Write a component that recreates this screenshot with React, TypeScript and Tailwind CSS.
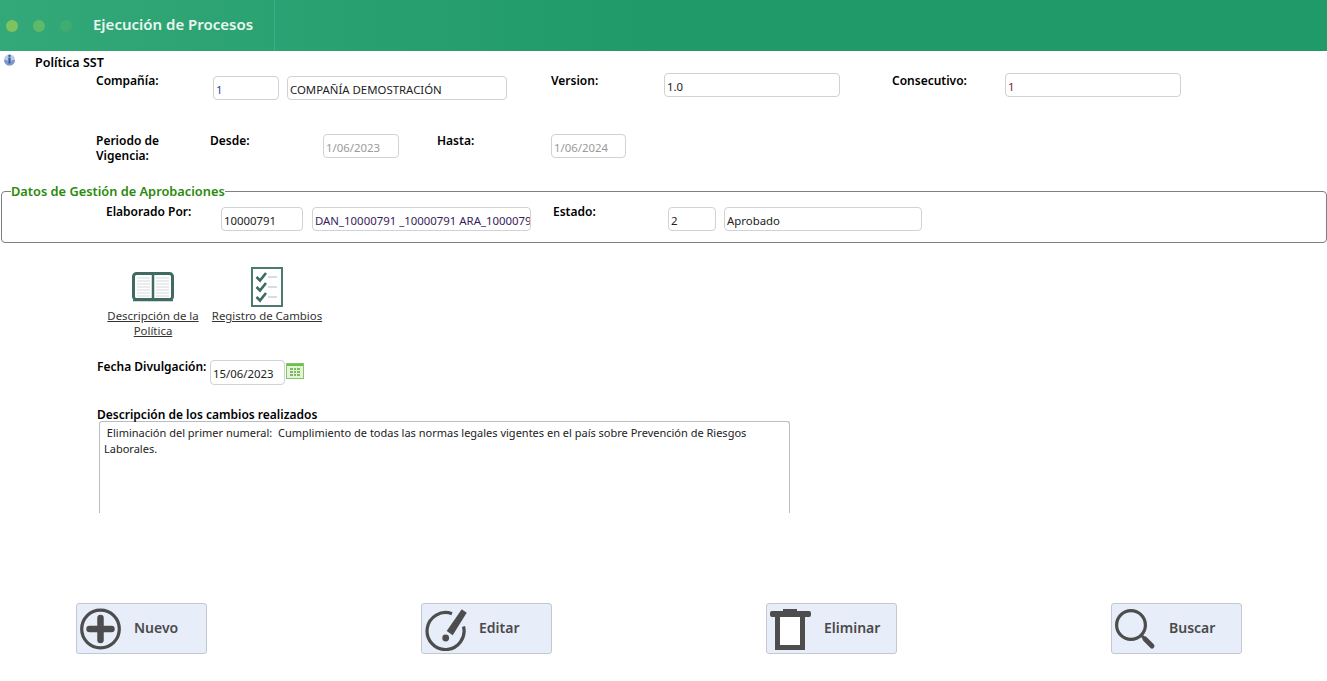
import { ReactNode } from "react";

const font = "font-['Noto_Sans',sans-serif]";

const Label = ({ children, className = "" }: { children: ReactNode; className?: string }) => (
  <div className={`text-[12px] leading-[15px] font-semibold text-black ${className}`}>{children}</div>
);

const Field = ({ value, className = "", tone = "text-[#222]" }: { value: string; className?: string; tone?: string }) => (
  <div
    className={`h-6 shrink-0 rounded-[4px] border border-[#cfd2d6] bg-white px-[2px] pt-[6px] text-[11.4px] leading-[14px] whitespace-nowrap overflow-hidden ${tone} ${className}`}
  >
    {value}
  </div>
);

const BookIcon = () => (
  <svg width="42" height="30" viewBox="0 0 42 30">
    <rect x="1.5" y="1.5" width="39" height="26" rx="3" fill="#fff" stroke="#3f6b62" strokeWidth="3" />
    <path d="M21 1v28" stroke="#3f6b62" strokeWidth="2.5" />
    <path d="M1 28.5h40" stroke="#3f6b62" strokeWidth="1.5" />
    <path
      d="M5 6h13M5 9h13M5 12h13M5 15h13M5 18h13M5 21h13M5 24h13M24 6h13M24 9h13M24 12h13M24 15h13M24 18h13M24 21h13M24 24h13"
      stroke="#d3dad8"
      strokeWidth="1"
    />
  </svg>
);

const ChecklistIcon = () => (
  <svg width="32" height="40" viewBox="0 0 32 40">
    <rect x="1" y="1" width="30" height="38" fill="#fff" stroke="#4a7a70" strokeWidth="2" />
    <path d="M5.5 10l3.5 3.5 6-7.5M5.5 20l3.5 3.5 6-7.5M5.5 30l3.5 3.5 6-7.5" fill="none" stroke="#3f6b62" strokeWidth="2.6" />
    <path d="M17 10h9M17 20h9M17 30h9" stroke="#ccd4d2" strokeWidth="1.6" />
  </svg>
);

const CalendarIcon = () => (
  <svg width="18" height="16" viewBox="0 0 18 16">
    <rect x="0.5" y="0.5" width="17" height="15" fill="#e4f3d8" stroke="#86c766" />
    <rect x="1" y="1" width="16" height="2" fill="#6cbf4a" />
    <rect x="4" y="5" width="10" height="8" fill="#7fb866" />
    <path d="M4 7.5h10M4 10.5h10M7.5 5v8M10.5 5v8" stroke="#e4f3d8" strokeWidth="1" />
  </svg>
);

const PlusIcon = () => (
  <svg width="42" height="44" viewBox="0 0 42 44">
    <circle cx="20.5" cy="22" r="18.8" fill="none" stroke="#4d4d4d" strokeWidth="3.2" />
    <path d="M20.5 11v22M9.5 22h22" stroke="#4d4d4d" strokeWidth="6.5" strokeLinecap="round" />
  </svg>
);

const EditIcon = () => (
  <svg width="44" height="44" viewBox="0 0 44 44">
    <path d="M27 6.7A18.5 18.5 0 1 0 38.5 19.5" fill="none" stroke="#4d4d4d" strokeWidth="3.2" />
    <path d="M36.7 2.3l5 3.4-14 22.6-6-4.3z" fill="#4d4d4d" />
    <circle cx="20.7" cy="31" r="3.4" fill="#4d4d4d" />
  </svg>
);

const TrashIcon = () => (
  <svg width="42" height="44" viewBox="0 0 42 44">
    <path d="M13 2h14v2h-14z" fill="#4d4d4d" />
    <rect x="0" y="4" width="41" height="6" rx="2" fill="#4d4d4d" />
    <rect x="5" y="9" width="30" height="34" fill="#4d4d4d" />
    <rect x="10" y="10" width="20" height="28" fill="#fff" />
  </svg>
);

const SearchIcon = () => (
  <svg width="44" height="44" viewBox="0 0 44 44">
    <circle cx="16" cy="18" r="14.4" fill="none" stroke="#4d4d4d" strokeWidth="3.2" />
    <path d="M27 29l3 3" stroke="#4d4d4d" strokeWidth="3" />
    <path d="M30 32l7 7" stroke="#4d4d4d" strokeWidth="5" strokeLinecap="round" />
  </svg>
);

const ActionButton = ({ icon, label }: { icon: ReactNode; label: string }) => (
  <button className="flex h-[51px] w-[131px] items-center rounded-[3px] border border-[#c3c7cf] bg-[#e7edf9] pl-[3px] text-left">
    <span className="flex w-[54px] shrink-0 items-center">{icon}</span>
    <span className="mt-[-2px] text-[14px] font-semibold text-[#4a4a4a]">{label}</span>
  </button>
);

export default function App() {
  return (
    <div className={`h-[681px] w-[1327px] overflow-hidden bg-white ${font}`}>
      <header className="flex h-[51px] items-stretch bg-gradient-to-r from-[#33a878] via-[#1f9a68] to-[#1f9a68]">
        <div className="flex w-[275px] items-center border-r border-[#3fae82] pl-[6px]">
          <span className="h-[12px] w-[12px] rounded-full bg-[#7fc35f]" />
          <span className="ml-[15px] h-[12px] w-[12px] rounded-full bg-[#5fb96a]" />
          <span className="ml-[15px] h-[12px] w-[12px] rounded-full bg-[#3fac72]" />
          <span className="ml-[21px] mt-[-2px] text-[15px] font-semibold text-[#eaf6f0]">Ejecución de Procesos</span>
        </div>
      </header>

      <div className="flex h-[22px] items-start pl-[3px] pt-[3px]">
        <svg width="13" height="13" viewBox="0 0 13 13">
          <circle cx="6.5" cy="6" r="5.5" fill="#b9c9e6" />
          <path d="M1 6a5.5 5.5 0 0 0 11 0l-3 0-2.5 4-2.5-4z" fill="#7f98c8" />
          <rect x="5.4" y="3.5" width="2.2" height="6" fill="#2f5aa8" />
          <rect x="5.4" y="0.8" width="2.2" height="2" fill="#2f5aa8" />
        </svg>
        <div className="ml-[19px] mt-[1px] text-[12.5px] leading-[15px] font-semibold text-black">Política SST</div>
      </div>

      <div className="flex h-[61px] items-start pl-[96px]">
        <Label className="w-[117px]">Compañía:</Label>
        <Field value="1" tone="text-[#2a4a9a]" className="mt-[3px] w-[66px]" />
        <Field value="COMPAÑÍA DEMOSTRACIÓN" className="ml-[8px] mt-[3px] w-[220px]" />
        <Label className="ml-[44px] w-[113px]">Version:</Label>
        <Field value="1.0" className="w-[176px]" />
        <Label className="ml-[52px] w-[113px]">Consecutivo:</Label>
        <Field value="1" tone="text-[#7a2a3a]" className="w-[176px]" />
      </div>

      <div className="flex h-[51px] items-start pl-[96px]">
        <Label className="mt-[-1px] w-[114px]">
          Periodo de
          <br />
          Vigencia:
        </Label>
        <Label className="mt-[-1px] w-[113px]">Desde:</Label>
        <Field value="1/06/2023" tone="text-[#9a9a9a]" className="w-[76px]" />
        <Label className="ml-[38px] mt-[-1px] w-[114px]">Hasta:</Label>
        <Field value="1/06/2024" tone="text-[#9a9a9a]" className="w-[75px]" />
      </div>

      <fieldset className="ml-[1px] h-[58px] rounded-[4px] border border-[#808080] pl-[104px]">
        <legend className="ml-[-95px] text-[12.8px] leading-[12px] font-semibold text-[#2a8a0a]">
          Datos de Gestión de Aprobaciones
        </legend>
        <div className="flex items-start pt-[7px]">
          <Label className="w-[115px]">Elaborado Por:</Label>
          <Field value="10000791" className="mt-[3px] w-[82px]" />
          <Field value="DAN_10000791 _10000791 ARA_10000791" tone="text-[#3a1a5a]" className="ml-[9px] mt-[3px] w-[219px]" />
          <Label className="ml-[22px] w-[115px]">Estado:</Label>
          <Field value="2" className="mt-[3px] w-[48px]" />
          <Field value="Aprobado" className="ml-[8px] mt-[3px] w-[198px]" />
        </div>
      </fieldset>

      <div className="ml-[103px] mt-[24px] flex h-[93px] items-start">
        <div className="flex w-[100px] flex-col items-center pt-[5px] text-center">
          <BookIcon />
          <a className="mt-[6px] text-[11.4px] leading-[15px] text-[#333] underline">
            Descripción de la
            <br />
            Política
          </a>
        </div>
        <div className="ml-[8px] flex w-[112px] flex-col items-center text-center">
          <ChecklistIcon />
          <a className="mt-[1px] text-[11.4px] leading-[15px] whitespace-nowrap text-[#333] underline">Registro de Cambios</a>
        </div>
      </div>

      <div className="ml-[97px] flex items-start">
        <Label className="mt-[-1px] w-[113px] whitespace-nowrap">Fecha Divulgación:</Label>
        <Field value="15/06/2023" className="h-[25px] w-[75px]" />
        <span className="ml-[1px] mt-[3px]">
          <CalendarIcon />
        </span>
      </div>

      <Label className="ml-[97px] mt-[22px]">Descripción de los cambios realizados</Label>
      <div className="ml-[99px] mt-[-1px] h-[92px] w-[691px] rounded-t-[3px] border border-b-0 border-[#b9bcc0] px-[4px] pt-[3px] text-[11px] leading-[16px] text-[#222]">
        &nbsp;Eliminación del primer numeral:&nbsp; Cumplimiento de todas las normas legales vigentes en el país sobre Prevención de Riesgos Laborales.
      </div>

      <div className="ml-[76px] mt-[90px] flex w-[1166px] justify-between">
        <ActionButton icon={<PlusIcon />} label="Nuevo" />
        <ActionButton icon={<EditIcon />} label="Editar" />
        <ActionButton icon={<TrashIcon />} label="Eliminar" />
        <ActionButton icon={<SearchIcon />} label="Buscar" />
      </div>
    </div>
  );
}
